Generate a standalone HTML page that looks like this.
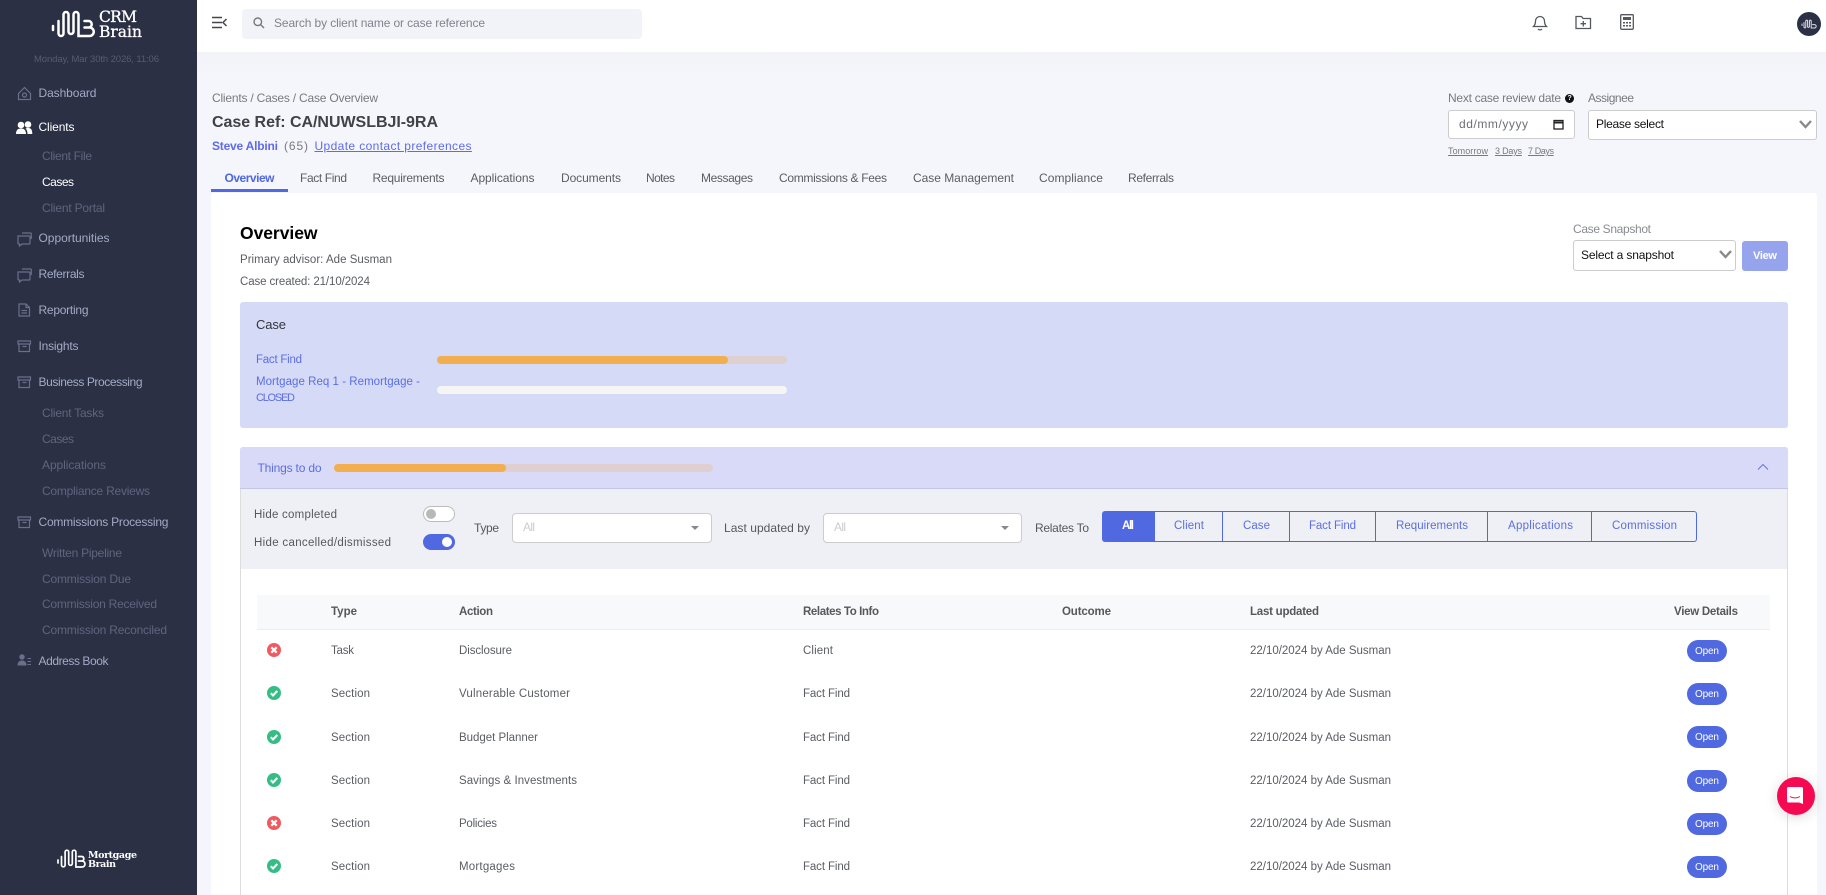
<!DOCTYPE html>
<html lang="en"><head><meta charset="utf-8"><title>Case Overview</title>
<style>
*{box-sizing:border-box}
html,body{margin:0;padding:0;width:1826px;height:895px;overflow:hidden;background:#f5f6fb;font-family:"Liberation Sans",sans-serif}
.a{position:absolute}
.t{position:absolute;white-space:nowrap;line-height:20px;font-size:12px;color:#5a5d62}
.n{color:#a3aac6;font-size:12px}
.s{color:#5f657f;font-size:12px}
.h{color:#55585c;font-weight:bold;font-size:11.500px}
.b{color:#5c6ee2;font-size:11.500px}
.o{position:absolute;left:1687px;width:40px;height:22px;border-radius:11px;background:#5068e0}
.o .t{color:#fff;font-size:10px;left:8px;top:1.500px}
.bar{position:absolute;height:8px;border-radius:4px}
.inp{position:absolute;background:#fff;border:1px solid #ccc;border-radius:3px}
.ic{position:absolute;overflow:visible}
.bd{position:absolute;top:511px;height:31px;border:1px solid #5068e0;border-left:0}
</style></head><body>
<div style="position:absolute;left:0;top:0;width:1826px;height:895px;overflow:hidden">

<!-- sidebar -->
<div class="a" style="left:0;top:0;width:197px;height:895px;background:#2b3044"></div>
<svg class="ic" style="left:0;top:0" width="197" height="50" fill="none" stroke="#fff" stroke-width="2.500" stroke-linecap="round">
<path d="M53 26v4"/><path d="M58.500 21V33.500a2.500 2.500 0 0 0 5 0V14.500a2.500 2.500 0 0 1 5 0V31.500a2.500 2.500 0 0 0 5 0V14.500a2.500 2.500 0 0 1 5 0V36H89.500a3.800 3.800 0 0 0 0-8.500H84.500M84.500 27.500H89a3.300 3.300 0 0 0 0-6.500H84.500"/>
</svg>
<div class="t" style="left:99px;top:7px;font:15.500px/20px 'DejaVu Serif',serif;color:#fff;-webkit-text-stroke:.3px #fff" fit="38">CRM</div>
<div class="t" style="left:99px;top:22px;font:15.500px/20px 'DejaVu Serif',serif;color:#fff;-webkit-text-stroke:.3px #fff" fit="43">Brain</div>
<div class="t" style="left:34px;top:50px;font-size:9.500px;color:#565c73" fit="125">Monday, Mar 30th 2026, 11:06</div>

<div class="t n" style="left:38.500px;top:83px" fit="58">Dashboard</div>
<div class="t n" style="left:38.500px;top:117px;color:#fff" fit="36">Clients</div>
<div class="t s" style="left:42px;top:146px" fit="50">Client File</div>
<div class="t s" style="left:42px;top:172px;color:#fff" fit="32">Cases</div>
<div class="t s" style="left:42px;top:198px" fit="63">Client Portal</div>
<div class="t n" style="left:38.500px;top:228px" fit="71">Opportunities</div>
<div class="t n" style="left:38.500px;top:264px" fit="46">Referrals</div>
<div class="t n" style="left:38.500px;top:300px" fit="50">Reporting</div>
<div class="t n" style="left:38.500px;top:336px" fit="40">Insights</div>
<div class="t n" style="left:38.500px;top:372px" fit="104">Business Processing</div>
<div class="t s" style="left:42px;top:403px" fit="62">Client Tasks</div>
<div class="t s" style="left:42px;top:429px" fit="32">Cases</div>
<div class="t s" style="left:42px;top:455px" fit="64">Applications</div>
<div class="t s" style="left:42px;top:481px" fit="108">Compliance Reviews</div>
<div class="t n" style="left:38.500px;top:512px" fit="130">Commissions Processing</div>
<div class="t s" style="left:42px;top:543px" fit="80">Written Pipeline</div>
<div class="t s" style="left:42px;top:569px" fit="89">Commission Due</div>
<div class="t s" style="left:42px;top:594px" fit="115">Commission Received</div>
<div class="t s" style="left:42px;top:620px" fit="125">Commission Reconciled</div>
<div class="t n" style="left:38.500px;top:651px" fit="70">Address Book</div>

<svg class="ic" style="left:0;top:0" width="197" height="700" fill="none" stroke="#6a7089" stroke-width="1.200">
<path d="M18.500 99.500V93.500L24.500 87.500l6 6v6z"/><circle cx="24.500" cy="95" r="2"/>
<g fill="#fff" stroke="none"><circle cx="21" cy="125" r="3.300"/><circle cx="28" cy="124.500" r="3.300"/><path d="M16 134c0-4 2-5.500 5-5.500s5 1.500 5 5.500zM27.500 134c0-2.500-.5-4-2-5.500 1-.5 1.500-.5 3-.5 3 0 3.800 2.500 3.800 6z"/></g>
<path d="M18 236h11a1 1 0 0 1 1 1v6a1 1 0 0 1-1 1h-7l-2.500 2v-2H19a1 1 0 0 1-1-1zM22 233h8.500a.8.8 0 0 1 .8.8V239"/>
<path d="M18 272h11a1 1 0 0 1 1 1v6a1 1 0 0 1-1 1h-7l-2.500 2v-2H19a1 1 0 0 1-1-1zM22 269h8.500a.8.8 0 0 1 .8.8V275"/>
<path d="M19 304h7l3.500 3.500V316H19zM26 304v3.500h3.500M21.500 310.500h5.500M21.500 313h5.500"/>
<path d="M18 341h12.500v3H18zM19 344v7.500h10.500V344M22.500 346.500h4"/>
<path d="M18 377h12.500v3H18zM19 380v7.500h10.500V380M22.500 382.500h4"/>
<path d="M18 517h12.500v3H18zM19 520v7.500h10.500V520M22.500 522.500h4"/>
<g fill="#6a7089" stroke="none"><circle cx="22" cy="657" r="2.700"/><path d="M17.500 665.500c0-3.500 2-5 4.500-5s4.500 1.500 4.500 5z"/><path d="M27.500 658h3.500v1h-3.500zM27.500 661h3.500v1h-3.500zM27.500 664h3.500v1h-3.500z"/></g>
</svg>

<svg class="ic" style="left:0;top:840px" width="197" height="40" fill="none" stroke="#fff" stroke-width="1.700" stroke-linecap="round">
<path d="M58 20v3"/><path d="M61.500 16.500V25a1.800 1.800 0 0 0 3.600 0V12a1.800 1.800 0 0 1 3.600 0V23.500a1.800 1.800 0 0 0 3.600 0V12a1.800 1.800 0 0 1 3.600 0V27H82a2.600 2.600 0 0 0 0-6h-3.500M78.500 21H82a2.300 2.300 0 0 0 0-4.500h-3.500"/>
</svg>
<div class="t" style="left:88px;top:846px;font:bold 9.500px/20px 'DejaVu Serif',serif;color:#fff" fit="49">Mortgage</div>
<div class="t" style="left:88px;top:855px;font:bold 9.500px/20px 'DejaVu Serif',serif;color:#fff" fit="28">Brain</div>

<!-- topbar -->
<div class="a" style="left:197px;top:0;width:1629px;height:52px;background:#fff"></div>
<div class="a" style="left:197px;top:52px;width:1629px;height:25px;background:linear-gradient(#f2f3f8,#f5f6fb)"></div>
<svg class="ic" style="left:212px;top:16px" width="16" height="14" fill="none" stroke="#44474f" stroke-width="1.500"><path d="M0 1.500h10M0 6.500h10M0 11.500h10M14.500 3l-3.500 3.500 3.500 3.500"/></svg>
<div class="a" style="left:242px;top:9px;width:400px;height:30px;border-radius:4px;background:#f2f3f9"></div>
<svg class="ic" style="left:253px;top:17px" width="12" height="12" fill="none" stroke="#77797f" stroke-width="1.400"><circle cx="4.800" cy="4.800" r="3.800"/><path d="M7.600 7.600l3.400 3.400"/></svg>
<div class="t" style="left:274px;top:13px;color:#80838d" fit="211">Search by client name or case reference</div>

<svg class="ic" style="left:1532px;top:14px" width="16" height="17" fill="none" stroke="#55585f" stroke-width="1.300"><path d="M1.500 12.500c1.500-1.500 2-3 2-5.500a4.500 4.500 0 0 1 9 0c0 2.500.5 4 2 5.500zM6 15c1 1.200 3 1.200 4 0"/></svg>
<svg class="ic" style="left:1575px;top:15px" width="17" height="15" fill="none" stroke="#55585f" stroke-width="1.300"><path d="M1 1.500h5.500l1.500 2h7.500v10H1zM8.300 6v5.500M5.500 8.700H11"/></svg>
<svg class="ic" style="left:1620px;top:14px" width="14" height="16"><rect x=".7" y=".7" width="12.600" height="14.600" rx="1" fill="none" stroke="#55585f" stroke-width="1.300"/><path d="M3 3h8v3H3zM3 8h2v1.500H3zM6 8h2v1.500H6zM9 8h2v1.500H9zM3 11h2v1.500H3zM6 11h2v1.500H6zM9 11h2v1.500H9z" fill="#55585f"/></svg>
<div class="a" style="left:1797px;top:12px;width:24px;height:24px;border-radius:50%;background:#2b3044"></div>
<svg class="ic" style="left:1797px;top:12px" width="24" height="24" fill="none" stroke="#dfe1e8" stroke-width="1" stroke-linecap="round"><path d="M5 12v1.500M7 10.500V15a.9.9 0 0 0 1.800 0V9a.9.9 0 0 1 1.800 0v5.500a.9.9 0 0 0 1.800 0V9a.9.9 0 0 1 1.800 0v7h3.300a1.700 1.700 0 0 0 0-3.400h-2"/></svg>

<!-- page head -->
<div class="t" style="left:212px;top:88px;color:#777a80" fit="166">Clients / Cases / Case Overview</div>
<div class="t" style="left:212px;top:112.500px;font-size:16px;font-weight:bold;color:#3f4246" fit="226">Case Ref: CA/NUWSLBJI-9RA</div>
<div class="t" style="left:212px;top:136px;font-weight:bold;color:#5d6bec" fit="66">Steve Albini</div>
<div class="t" style="left:284px;top:136px;color:#777a80" fit="24">(65)</div>
<div class="t" style="left:314.500px;top:136px;color:#5d6bec;text-decoration:underline" fit="157">Update contact preferences</div>

<div class="t" style="left:224.500px;top:167.500px;color:#4f67e0;font-weight:bold" fit="50">Overview</div>
<div class="t" style="left:300px;top:167.500px" fit="47">Fact Find</div>
<div class="t" style="left:372.500px;top:167.500px" fit="72">Requirements</div>
<div class="t" style="left:470.500px;top:167.500px" fit="64">Applications</div>
<div class="t" style="left:561px;top:167.500px" fit="60">Documents</div>
<div class="t" style="left:646px;top:167.500px" fit="29">Notes</div>
<div class="t" style="left:701px;top:167.500px" fit="52">Messages</div>
<div class="t" style="left:779px;top:167.500px" fit="108">Commissions &amp; Fees</div>
<div class="t" style="left:913px;top:167.500px" fit="101">Case Management</div>
<div class="t" style="left:1039px;top:167.500px" fit="64">Compliance</div>
<div class="t" style="left:1128px;top:167.500px" fit="46">Referrals</div>
<div class="a" style="left:211px;top:189px;width:77px;height:3px;background:#5068e0"></div>

<div class="t" style="left:1448px;top:88px;color:#777a80" fit="113">Next case review date</div>
<div class="a" style="left:1565px;top:94px;width:9px;height:9px;border-radius:50%;background:#111"></div>
<div class="t" style="left:1567.500px;top:88.500px;font:bold 7px/20px 'Liberation Sans',sans-serif;color:#fff">?</div>
<div class="t" style="left:1588px;top:88px;color:#777a80" fit="46">Assignee</div>
<div class="inp" style="left:1448px;top:110px;width:127px;height:29px"></div>
<div class="t" style="left:1459px;top:114px;color:#6d6f75" fit="69">dd/mm/yyyy</div>
<svg class="ic" style="left:1553px;top:119px" width="11" height="11" fill="none" stroke="#222" stroke-width="1.300"><rect x="1" y="1.500" width="9" height="8.500"/><path d="M1 3.500h9" stroke-width="2"/></svg>
<div class="inp" style="left:1588px;top:110px;width:229px;height:29.500px"></div>
<div class="t" style="left:1596px;top:114px;color:#111" fit="68">Please select</div>
<svg class="ic" style="left:1799px;top:120px" width="13" height="9" fill="none" stroke="#8a8a8a" stroke-width="2.400"><path d="M1 1l5.500 6L12 1"/></svg>
<div class="t" style="left:1448px;top:141px;font-size:9px;color:#777a80;text-decoration:underline" fit="40">Tomorrow</div>
<div class="t" style="left:1495px;top:141px;font-size:9px;color:#777a80;text-decoration:underline" fit="27">3 Days</div>
<div class="t" style="left:1528px;top:141px;font-size:9px;color:#777a80;text-decoration:underline" fit="26">7 Days</div>

<!-- card -->
<div class="a" style="left:211px;top:193px;width:1606px;height:702px;background:#fff;border-radius:3px 3px 0 0"></div>
<div class="t" style="left:240px;top:223px;font-size:17.500px;font-weight:bold;color:#000" fit="77.500">Overview</div>
<div class="t" style="left:240px;top:250px;font-size:11.500px" fit="152">Primary advisor: Ade Susman</div>
<div class="t" style="left:240px;top:272px;font-size:11.500px" fit="130">Case created: 21/10/2024</div>

<div class="t" style="left:1573px;top:219px;color:#888b90" fit="78">Case Snapshot</div>
<div class="inp" style="left:1573px;top:240px;width:163px;height:31px"></div>
<div class="t" style="left:1581px;top:245px;color:#111" fit="93">Select a snapshot</div>
<svg class="ic" style="left:1719px;top:250px" width="13" height="9" fill="none" stroke="#8a8a8a" stroke-width="2.400"><path d="M1 1l5.500 6L12 1"/></svg>
<div class="a" style="left:1742px;top:241px;width:46px;height:30px;border-radius:3px;background:#95a4ec"></div>
<div class="t" style="left:1753px;top:246px;color:#fff;font-weight:bold;font-size:11px" fit="24">View</div>

<!-- Case panel -->
<div class="a" style="left:240px;top:302px;width:1548px;height:126px;border-radius:3px;background:#d5daf7"></div>
<div class="t" style="left:256px;top:315px;font-size:13px;color:#33363c" fit="30">Case</div>
<div class="t b" style="left:256px;top:350px" fit="46">Fact Find</div>
<div class="t b" style="left:256px;top:372px" fit="164">Mortgage Req 1 - Remortgage -</div>
<div class="t b" style="left:256px;top:388px;font-size:11px" fit="39">CLOSED</div>
<div class="bar" style="left:437px;top:356px;width:350px;background:#ddd0cf"></div>
<div class="bar" style="left:437px;top:356px;width:291px;background:#f2ae4f"></div>
<div class="bar" style="left:437px;top:386px;width:350px;background:#f5f5f5"></div>

<!-- Things to do -->
<div class="a" style="left:240px;top:447px;width:1548px;height:448px;border:1px solid #ddd;border-bottom:0;border-radius:3px 3px 0 0;background:#fff"></div>
<div class="a" style="left:240px;top:447px;width:1548px;height:42px;background:#d9daf7;border-bottom:1px solid #c5c6e2;border-radius:3px 3px 0 0"></div>
<div class="t b" style="left:257.500px;top:458px;font-size:12px" fit="64">Things to do</div>
<div class="bar" style="left:334px;top:464px;width:379px;background:#dfcfd0"></div>
<div class="bar" style="left:334px;top:464px;width:172px;background:#f2ae4f"></div>
<svg class="ic" style="left:1757px;top:463px" width="12" height="8" fill="none" stroke="#5c6ee2" stroke-width=".9"><path d="M1 6.500L6 1.500l5 5"/></svg>
<div class="a" style="left:241px;top:489px;width:1546px;height:80px;background:#eef0f6"></div>
<div class="t" style="left:254px;top:505px;color:#55585c;font-size:11.500px" fit="83">Hide completed</div>
<div class="t" style="left:254px;top:533px;color:#55585c;font-size:11.500px" fit="137">Hide cancelled/dismissed</div>
<div class="a" style="left:423px;top:506px;width:32px;height:16px;border-radius:8px;border:1px solid #bbb;background:#fff"></div>
<div class="a" style="left:426px;top:509px;width:10px;height:10px;border-radius:50%;background:#b8b8b8"></div>
<div class="a" style="left:423px;top:534px;width:32px;height:16px;border-radius:8px;background:#5068e0"></div>
<div class="a" style="left:442px;top:537px;width:10px;height:10px;border-radius:50%;background:#fff"></div>
<div class="t" style="left:474px;top:518px;color:#55585c" fit="25">Type</div>
<div class="inp" style="left:512px;top:513px;width:200px;height:30px;border-radius:4px"></div>
<div class="t" style="left:523px;top:517px;color:#ccc" fit="12">All</div>
<svg class="ic" style="left:691px;top:526px" width="8" height="4"><path d="M0 0h8L4 4z" fill="#888"/></svg>
<div class="t" style="left:724px;top:518px;color:#55585c" fit="86">Last updated by</div>
<div class="inp" style="left:823px;top:513px;width:199px;height:30px;border-radius:4px"></div>
<div class="t" style="left:834px;top:517px;color:#ccc" fit="12">All</div>
<svg class="ic" style="left:1001px;top:526px" width="8" height="4"><path d="M0 0h8L4 4z" fill="#888"/></svg>
<div class="t" style="left:1035px;top:518px;color:#55585c" fit="54">Relates To</div>

<div class="a" style="left:1102px;top:511px;width:53px;height:31px;background:#5068e0;border-radius:3px 0 0 3px"></div>
<div class="bd" style="left:1155px;width:68px"></div>
<div class="bd" style="left:1223px;width:67px"></div>
<div class="bd" style="left:1290px;width:86px"></div>
<div class="bd" style="left:1376px;width:112px"></div>
<div class="bd" style="left:1488px;width:104px"></div>
<div class="bd" style="left:1592px;width:105px;border-radius:0 3px 3px 0"></div>
<div class="t b" style="left:1122px;top:516px;color:#fff;font-weight:bold" fit="12">All</div>
<div class="t b" style="left:1174px;top:516px" fit="30">Client</div>
<div class="t b" style="left:1243px;top:516px" fit="27">Case</div>
<div class="t b" style="left:1309px;top:516px" fit="47">Fact Find</div>
<div class="t b" style="left:1396px;top:516px" fit="72">Requirements</div>
<div class="t b" style="left:1508px;top:516px" fit="65">Applications</div>
<div class="t b" style="left:1612px;top:516px" fit="65">Commission</div>

<!-- table -->
<div class="a" style="left:257px;top:595px;width:1513px;height:35px;background:#f8f9fa;border-bottom:1px solid #eceef0"></div>
<div class="t h" style="left:331px;top:602px" fit="26">Type</div>
<div class="t h" style="left:459px;top:602px" fit="34">Action</div>
<div class="t h" style="left:803px;top:602px" fit="76">Relates To Info</div>
<div class="t h" style="left:1062px;top:602px" fit="49">Outcome</div>
<div class="t h" style="left:1250px;top:602px" fit="69">Last updated</div>
<div class="t h" style="left:1674px;top:602px" fit="64">View Details</div>

<svg class="ic" style="left:0;top:0" width="300" height="895">
<defs>
<g id="x"><circle r="7" fill="#f0595f"/><path d="M-2.700-2.700L2.700 2.700M2.700-2.700L-2.700 2.700" stroke="#fff" stroke-width="2.200"/></g>
<g id="c"><circle r="7" fill="#35bd86"/><path d="M-3.200 .2L-1 2.500L3.300-2" fill="none" stroke="#fff" stroke-width="2"/></g>
</defs>
<use href="#x" x="274" y="650"/><use href="#c" x="274" y="693"/><use href="#c" x="274" y="737"/><use href="#c" x="274" y="780"/><use href="#x" x="274" y="823"/><use href="#c" x="274" y="866"/>
</svg>

<div class="t" style="left:331px;top:641px;font-size:11.500px" fit="23">Task</div>
<div class="t" style="left:459px;top:641px;font-size:11.500px" fit="53">Disclosure</div>
<div class="t" style="left:803px;top:641px;font-size:11.500px" fit="30">Client</div>
<div class="t" style="left:1250px;top:641px;font-size:11.500px" fit="141">22/10/2024 by Ade Susman</div>
<div class="o" style="top:640px"><div class="t" fit="24">Open</div></div>

<div class="t" style="left:331px;top:684px;font-size:11.500px" fit="39">Section</div>
<div class="t" style="left:459px;top:684px;font-size:11.500px" fit="111">Vulnerable Customer</div>
<div class="t" style="left:803px;top:684px;font-size:11.500px" fit="47">Fact Find</div>
<div class="t" style="left:1250px;top:684px;font-size:11.500px" fit="141">22/10/2024 by Ade Susman</div>
<div class="o" style="top:683px"><div class="t" fit="24">Open</div></div>

<div class="t" style="left:331px;top:728px;font-size:11.500px" fit="39">Section</div>
<div class="t" style="left:459px;top:728px;font-size:11.500px" fit="79">Budget Planner</div>
<div class="t" style="left:803px;top:728px;font-size:11.500px" fit="47">Fact Find</div>
<div class="t" style="left:1250px;top:728px;font-size:11.500px" fit="141">22/10/2024 by Ade Susman</div>
<div class="o" style="top:726px"><div class="t" fit="24">Open</div></div>

<div class="t" style="left:331px;top:771px;font-size:11.500px" fit="39">Section</div>
<div class="t" style="left:459px;top:771px;font-size:11.500px" fit="118">Savings &amp; Investments</div>
<div class="t" style="left:803px;top:771px;font-size:11.500px" fit="47">Fact Find</div>
<div class="t" style="left:1250px;top:771px;font-size:11.500px" fit="141">22/10/2024 by Ade Susman</div>
<div class="o" style="top:770px"><div class="t" fit="24">Open</div></div>

<div class="t" style="left:331px;top:814px;font-size:11.500px" fit="39">Section</div>
<div class="t" style="left:459px;top:814px;font-size:11.500px" fit="38">Policies</div>
<div class="t" style="left:803px;top:814px;font-size:11.500px" fit="47">Fact Find</div>
<div class="t" style="left:1250px;top:814px;font-size:11.500px" fit="141">22/10/2024 by Ade Susman</div>
<div class="o" style="top:813px"><div class="t" fit="24">Open</div></div>

<div class="t" style="left:331px;top:857px;font-size:11.500px" fit="39">Section</div>
<div class="t" style="left:459px;top:857px;font-size:11.500px" fit="56">Mortgages</div>
<div class="t" style="left:803px;top:857px;font-size:11.500px" fit="47">Fact Find</div>
<div class="t" style="left:1250px;top:857px;font-size:11.500px" fit="141">22/10/2024 by Ade Susman</div>
<div class="o" style="top:856px"><div class="t" fit="24">Open</div></div>

<!-- chat -->
<div class="a" style="left:1777px;top:777px;width:38px;height:38px;border-radius:50%;background:#f50a52;box-shadow:0 2px 12px rgba(0,0,0,.15)"></div>
<svg class="ic" style="left:1787px;top:787px" width="18" height="18"><path d="M1.500 0h13a1.500 1.500 0 0 1 1.500 1.500V17l-4-1.500H1.500A1.500 1.500 0 0 1 0 14V1.500A1.500 1.500 0 0 1 1.500 0z" fill="#fff"/><path d="M3 9.500c3 2 7 2 10 0" fill="none" stroke="#f50a52" stroke-width="1"/></svg>

</div>
<script>
document.querySelectorAll('[fit]').forEach(function(e){
var w=parseFloat(e.getAttribute('fit')),c=e.getBoundingClientRect().width,n=e.textContent.length;
if(n>1)e.style.letterSpacing=((w-c)/(n-1)).toFixed(3)+'px';
});
</script>
</body></html>
